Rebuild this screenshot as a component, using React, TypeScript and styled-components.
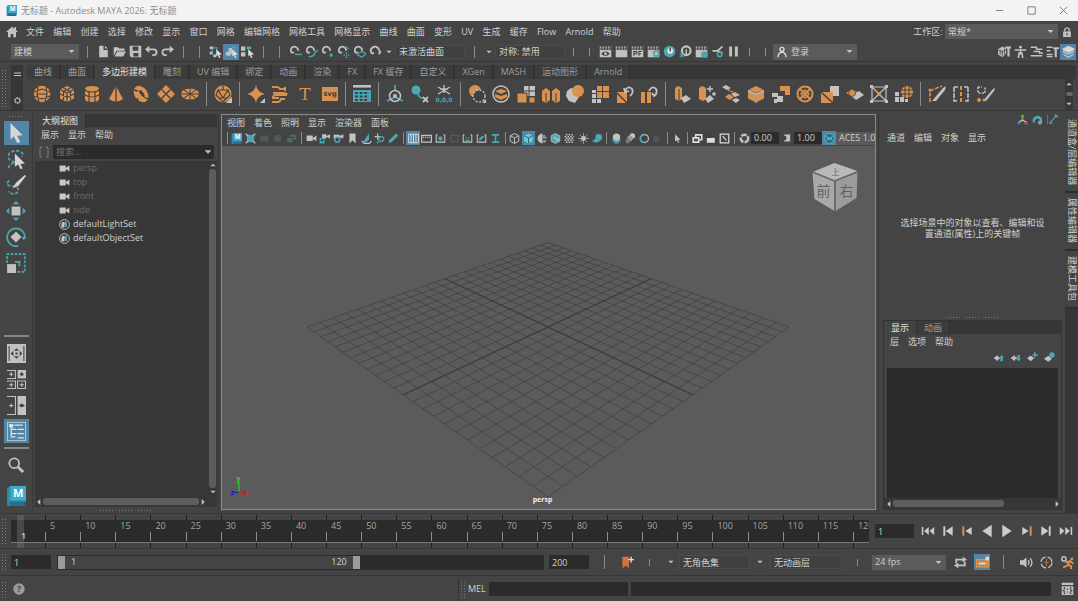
import React from 'react';
import styled, { createGlobalStyle, css } from 'styled-components';

const O = '#d8914f';
const T = '#48a9b5';
const G = '#c2c2c2';
const D = '#404040';

const GlobalStyle = createGlobalStyle`
  * { box-sizing: border-box; }
  body { margin: 0; background: #444; }
  body, button, input, select {
    font-family: "Open Sans", "Noto Sans CJK SC", sans-serif;
    font-size: 9px;
    line-height: 12px;
    color: #d0d0d0;
  }
  button, input, select { border: 0; padding: 0; margin: 0; border-radius: 0; background: none; outline: none; }
  svg { display: block; flex: none; }
  h1, h2, ul { margin: 0; padding: 0; font-size: 9px; font-weight: 400; list-style: none; }
`;

/* ---------- icons, all on an 18 unit grid ---------- */

const cubePath = 'M9 1l7 3.5v9L9 17l-7-3.5v-9z';
const clap = (
  <>
    <path d="M1 7h16v10H1z" fill={G} />
    <path d="M1 3h16M1 5.5h16" stroke={G} strokeWidth="1.6" strokeDasharray="2.2 1.6" />
  </>
);
const magnet = <path d="M4 11C-1 4 8-1 12 5l1 3M4 11l3-1" fill="none" stroke={G} strokeWidth="2.4" />;
const layerLeft = <path d="M1 10l7-5v3h3v4H8v3z" fill={G} />;
const frame = <path d="M2 3v12h14V3M2 3h2M14 3h2" fill="none" stroke={G} strokeWidth="1.8" />;

const icons: Record<string, React.ReactNode> = {
  home: <path d="M9 1L0 9h3v8h4v-5h4v5h4V9h3l-3-3V2h-3v2z" fill={G} />,
  newFile: <path d="M3 1h6v6h6v10H3zM11 1l4 4h-4z" fill={G} />,
  open: <path d="M1 3h6l2 2h7v3H5l-4 7zM6 9h12l-4 7H2z" fill={G} />,
  save: <path d="M1 1h16v16H3l-2-2zM5 2v6h8V2zM6 11v5h7v-5z" fill={G} fillRule="evenodd" />,
  undo: <><path d="M0 6l6-5v10z" fill={G} /><path d="M4 6h8q4 0 4 4t-4 4h-2" fill="none" stroke={G} strokeWidth="2.6" /></>,
  redo: <><path d="M18 6l-6-5v10z" fill={G} /><path d="M14 6H6q-4 0-4 4t4 4h2" fill="none" stroke={G} strokeWidth="2.6" /></>,
  selHier: <><path d="M1 2h5v4H1zM1 9h4v4H1zM6 13h4v4H6z" fill={G} /><path d="M7 4h4v3M5 7v6" stroke={T} strokeWidth="1.5" fill="none" /><path d="M10 6l8 7-4 .4 2 4-2 .6-2-4-2 2z" fill="#ddd" /></>,
  selObj: <><path d="M1 13a4 4 0 0 1 4-4V4h5v7l-3 4H2z" fill={G} /><path d="M10 3h4v5" stroke={T} strokeWidth="2" fill="none" /><path d="M10 6l8 7-4 .4 2 4-2 .6-2-4-2 2z" fill="#ddd" /></>,
  selComp: <><path d="M0 2h6v6H0zM0 10h6v6H0z" fill={G} /><path d="M8 2h6v4H8z" fill={T} /><path d="M10 6l8 7-4 .4 2 4-2 .6-2-4-2 2z" fill="#ddd" /></>,
  snapGrid: <>{magnet}<path d="M8 13h10" stroke={T} strokeWidth="2" /></>,
  snapCurve: <>{magnet}<path d="M5 16q8 1 9-6l4-3" stroke={T} strokeWidth="2" fill="none" /></>,
  snapPoint: <>{magnet}<circle cx="14" cy="14" r="2.4" fill={T} /></>,
  snapCenter: <>{magnet}<path d="M9 14h8M13 10v8M12 2l5 4" stroke={T} strokeWidth="2" strokeDasharray="2 1" /></>,
  snapPlane: <>{magnet}<path d="M6 13l6-4 6 3-6 5z" fill="none" stroke={T} strokeWidth="1.6" /></>,
  live: <path d="M4 12C-1 4 9-1 13 5l3 6M4 12l3-1M13 12l3-1" fill="none" stroke={G} strokeWidth="2.6" />,
  renderView: <>{clap}<path d="M3 12q6-6 12 0-6 6-12 0z" fill={D} /><circle cx="9" cy="12" r="2" fill={G} /></>,
  render: clap,
  ipr: <>{clap}<path d="M4 15V9h4v3H4M11 15V9h4M11 12h3" stroke={D} fill="none" strokeWidth="1.5" /></>,
  renderSet: <>{clap}<circle cx="13" cy="12" r="3.5" fill={G} stroke={T} strokeWidth="2.5" /></>,
  hyper: <><circle cx="9" cy="9" r="8" fill={T} /><circle cx="10" cy="8" r="4" fill="#e8e8e8" /><path d="M10 4v5" stroke={D} strokeWidth="2" /></>,
  lightEd: <><circle cx="10" cy="8" r="6" fill="none" stroke={G} strokeWidth="3" /><path d="M10 6v7" stroke={G} strokeWidth="2" /><path d="M1 12l6 5M7 12l-6 5" stroke={T} strokeWidth="1.6" /></>,
  renderSeq: <>{clap}<circle cx="13" cy="13" r="4.5" fill={T} /></>,
  setup: <><path d="M2 8h8M8 9l8-7M8 8l8 3" fill="none" stroke={G} strokeWidth="2.4" /><circle cx="12" cy="13" r="3" fill="none" stroke={T} strokeWidth="2" /></>,
  pause: <path d="M3 2h4v14H3zM11 2h4v14h-4z" fill={G} />,
  user: <path d="M6 5a3 3 0 1 1 6 0 3 3 0 1 1-6 0M3 17q0-7 6-8 6 1 6 8" fill="none" stroke="#ddd" strokeWidth="2" />,
  lock: <><path d="M2 8h14v10H2z" fill={G} /><path d="M5 8V4q4-5 8 0v4" fill="none" stroke={G} strokeWidth="2.4" /><path d="M9 11v4" stroke={D} strokeWidth="2" /></>,
  modelKit: <><path d="M0 6l6-4 5 3v7l-5 5-6-4zM10 2h8v3h-2v11h-3V5h-3z" fill={G} /><path d="M3 6v8M6 7v9M9 5v9M0 7l6 3 5-4" fill="none" stroke={D} /></>,
  human: <><circle cx="9" cy="3" r="2" fill={G} /><path d="M1 7h16M9 7v6M6 18l1-7h4l1 7" fill="none" stroke={G} strokeWidth="2.2" /></>,
  attr: <path d="M1 3h8v3h8M5 9h8v2h5M1 15h11M12 15h5" fill="none" stroke={G} strokeWidth="2" />,
  toolSet: <><path d="M1 3h8M1 8h5M1 13h8M1 16h8" stroke={G} strokeWidth="2" /><path d="M10 3h8v3h-3v11h-3V6h-2z" fill={G} /></>,
  channelBox: <><path d="M9 1l8 4v2l-8 4-8-4V5z" fill="#d8d8d8" /><path d="M1 8l8 4 8-4v2l-8 4-8-4zM2 12l7 4 7-4v2l-7 4-7-4z" fill="#c6cbce" /></>,
  sphere: <><circle cx="9" cy="9" r="8.3" fill={O} /><path d="M1 7l8-3 8 3M1 11l8 3 8-3M5 1.500L4 9l2 8M13 1.500L14 9l-2 8M4 9h10" fill="none" stroke={D} strokeWidth="1.1" /></>,
  cube: <><path d={cubePath} fill={O} /><path d="M2 4.500l7 3.500 7-3.500M9 8v9M5.500 3l7 3.500V15M12.500 3l-7 3.500V15M2 9l7 3.500L16 9" fill="none" stroke={D} strokeWidth="1.1" /></>,
  cylinder: <><path d="M2 4q0-3 7-3t7 3v10q0 3-7 3t-7-3z" fill={O} /><path d="M2 4q0 3 7 3t7-3M2 10q7 4 14 0M6 6v11M12 6v11" fill="none" stroke={D} strokeWidth="1.2" /></>,
  cone: <><path d="M9 1l7 13q-7 5-14 0z" fill={O} /><path d="M9 1v16" stroke={D} strokeWidth="1.3" /></>,
  torus: <><ellipse cx="9" cy="9" rx="6.500" ry="9" fill={O} transform="rotate(-35 9 9)" /><ellipse cx="10" cy="9" rx="1.600" ry="4" fill={D} transform="rotate(-35 9 9)" /><path d="M2 5l4 1M12 12l4 2M6 13l-1 3" stroke={D} strokeWidth="1.300" /></>,
  plane: <><path d="M9 0l9 9-9 9-9-9z" fill={O} /><path d="M4.500 4.500l9 9M13.500 4.500l-9 9" stroke={D} strokeWidth="1.300" /></>,
  disc: <><ellipse cx="9" cy="9" rx="9" ry="5.500" fill={O} /><path d="M3 5l12 8M15 5L3 13M9 3v12M0 9h18" stroke={D} strokeWidth="1" /></>,
  platonic: <><circle cx="9" cy="9" r="8.500" fill={O} /><path d="M4 5h10l2 5-7 7-7-7zM9 13L4 5M9 13l5-8M9 1v4M5 13h8" fill="none" stroke={D} strokeWidth="1.200" /><path d="M18 12v6h-6z" fill={G} /></>,
  star: <><path d="M9 0q1 7 9 9-8 2-9 9-1-7-9-9 8-2 9-9z" fill={O} /><path d="M18 13v5h-5z" fill={G} /></>,
  sweep: <path d="M1 2h5q2 0 3 2h5M14 2v4M2 8h10q5 0 3 2H6q-5 0-4 3h6M1 17h6q2 0 3-3h4" fill="none" stroke={O} strokeWidth="2" />,
  type: <text x="9" y="15" textAnchor="middle" fontFamily="DejaVu Serif" fontSize="17" fill={O}>T</text>,
  svg: <><rect x="1" y="2" width="16" height="14" fill={O} /><text x="9" y="11" textAnchor="middle" fontFamily="DejaVu Sans" fontWeight="700" fontSize="7" fill={D}>svg</text></>,
  content: <><path d="M0 1h18v16H0z" fill={T} /><path d="M0 4h18" stroke={D} strokeWidth="2" /><path d="M2 8h14M2 11.500h14M2 15h14" stroke={D} strokeWidth="2" strokeDasharray="3 1.600" /><path d="M0 1h18" stroke={G} strokeWidth="2" /></>,
  poseAxis: <><path d="M9 0v5M9 12l-8 4M9 12l8 4" stroke={T} strokeWidth="1.800" /><circle cx="9" cy="11" r="5.500" fill="none" stroke={G} strokeWidth="1.500" /><circle cx="9" cy="11" r="2" fill={G} /></>,
  delHist: <><circle cx="5" cy="5" r="4.500" fill={T} /><path d="M7 9q1 4 5 4" stroke={T} strokeWidth="1.600" fill="none" /><path d="M12 12l5 5M17 12l-5 5" stroke={G} strokeWidth="1.800" /></>,
  freeze: <><path d="M9 0v8M3 2l12 7M15 2L3 9M5 4h8" stroke={G} strokeWidth="1.300" /><text x="9" y="17" textAnchor="middle" fontFamily="DejaVu Sans" fontWeight="700" fontSize="6" fill={T}>0,0,0</text></>,
  booleanOp: <><circle cx="7" cy="6" r="6" fill={O} /><circle cx="11" cy="11" r="6" fill={D} stroke={G} strokeWidth="1.400" strokeDasharray="2 1.500" /><path d="M18 14v4h-4z" fill={G} /></>,
  combine: <><circle cx="9" cy="9" r="8" fill="none" stroke={G} strokeWidth="1.500" /><path d="M3 6l6-2 6 2-6 3zM3 9l6 2 6-2v3l-6 3-6-3z" fill={O} /></>,
  quad: <><path d="M7 1h11v10H7z" fill={G} /><path d="M12 1v10M7 6h11" stroke={D} /><path d="M0 8h10v10H0zM12 12h6v6h-6z" fill={O} stroke={D} /></>,
  mirror: <><path d="M0 6l4-3 4 3v9l-4 3-4-2z" fill={O} /><path d="M10 6l4-3 4 3v10l-4 2-4-3z" fill={O} /><path d="M4 8v9M14 8v9M9 2v16" stroke={D} strokeWidth="1" /></>,
  smooth: <><path d="M1 6l4-3 6 2 2 7-4 6-6-2-3-5z" fill={G} /><circle cx="12" cy="6" r="6" fill={O} /></>,
  subdiv: <><path d="M1 9h4v4H1zM1 14h4v4H1zM6 14h4v4H6zM1 5h4v3H1z" fill={G} /><path d="M6 1h5v5H6zM12 1h6v5h-6zM6 7h5v6H6zM12 7h6v6h-6z" fill={O} /></>,
  spinCcw: <><path d="M1 7h10v11H1z" fill={O} /><path d="M1 8l10 10" stroke={D} strokeWidth="1.400" /><path d="M9 6q3-6 7-2 2 4-2 7M8 3l1 4 4-1" fill="none" stroke={G} strokeWidth="1.800" /></>,
  spinCw: <><path d="M1 7h4v11H1zM7 7h4v11H7z" fill={O} /><path d="M9 6q3-6 7-2 2 4-2 7M17 8l-3 3-2-3" fill="none" stroke={G} strokeWidth="1.800" /></>,
  extrude: <><path d="M2 3l3-2 4 2v11l-3 2-4-2z" fill={O} /><path d="M8 13l5-3 5 4-7 4z" fill={G} /><path d="M6 4v12" stroke={D} /></>,
  bevel: <><path d="M1 3l3-2 4 2v11l-3 2-4-2z" fill={O} /><path d="M7 14l5-4 4 4-6 4z" fill={G} /><path d="M12 1v6M9 4h6M16 7v4M14 9h4" stroke={G} strokeWidth="1.400" /></>,
  bridge: <><path d="M0 2l4-2 5 3-4 2zM9 9l4-2 5 3-5 2zM10 15l4-2 4 2-4 3z" fill={G} /><path d="M3 12l4-3 5 3-4 3z" fill={O} /><path d="M6 5l9 4" stroke={O} strokeWidth="1.600" strokeDasharray="2 1" /></>,
  append: <><path d="M9 1l7 3.500-7 3.500-7-3.500z" fill={O} /><path d="M1 6l7 3.500V17l-7-3.500zM17 6l-7 3.500V17l7-3.500z" fill={O} /><path d="M1 5.500l8 4 8-4M9 9v9" fill="none" stroke={G} strokeWidth="1.400" /></>,
  wedge: <><path d="M8 1h10v9h-5V6H8z" fill={O} /><path d="M0 8h6v3h5v6H5v-5H0zM2 14h3v4H2z" fill={G} /></>,
  circularize: <><circle cx="9" cy="9" r="7.500" fill="none" stroke={O} strokeWidth="2" /><path d="M4 4l10 10M14 4L4 14" stroke={O} strokeWidth="2" /><path d="M9 5l4 4-4 4-4-4z" fill="none" stroke={O} strokeWidth="1.500" /></>,
  connect: <><path d="M9 1h9v10H9z" fill={G} /><path d="M0 7h12v11H0z" fill={O} /><path d="M0 7l12 11" stroke={D} strokeWidth="1.400" /></>,
  detach: <><path d="M0 8l6-4 7 4-6 4z" fill={O} /><path d="M5 11l8-5 5 4-8 5z" fill={G} /><circle cx="6" cy="8" r="3.500" fill={O} stroke={D} strokeWidth=".8" /></>,
  lattice: <><path d="M2 2h14v14H2zM2 2l14 14M16 2L2 16" fill="none" stroke={G} strokeWidth="1.200" /><circle cx="9" cy="9" r="2" fill={O} /><path d="M0 0h3v3H0zM15 0h3v3h-3zM0 15h3v3H0zM15 15h3v3h-3z" fill={G} /></>,
  remesh: <><circle cx="12" cy="7" r="6" fill={O} /><path d="M6 5h12M6 9h12M10 1v12M14 1v12" stroke={D} /><path d="M0 7h4v4H0zM0 12h4v5H0zM5 12h4v5H5z" fill={G} /><path d="M10 14h3v3h-3z" fill={G} /></>,
  multicut: <><path d="M2 17V6l4-2 8-3" fill="none" stroke={O} strokeWidth="1.600" strokeDasharray="4 1.500" /><path d="M4 16L15 3l3-2-1 4L8 16z" fill={G} /><circle cx="2" cy="5" r="1.600" fill={O} /></>,
  targetWeld: <><path d="M2 2h4M2 2v14h4M16 2h-4M16 2v14h-4" fill="none" stroke={G} strokeWidth="1.600" strokeDasharray="5 1" /><path d="M9 1v16" stroke={O} strokeWidth="2" strokeDasharray="4 2" /></>,
  quadDraw: <><path d="M1 2h4M1 2v6h7V2" fill="none" stroke={G} strokeWidth="1.600" strokeDasharray="2 1.300" /><path d="M6 16L16 4l2-1-1 3L9 16z" fill={G} /><circle cx="2" cy="15" r="2" fill={O} /><circle cx="7" cy="15" r="1.500" fill={O} /></>,
  arrow: <path d="M4 0l11 11-5 .5 3 5.500-3 1-3-6-3 3z" fill="#d6d6d6" />,
  lasso: <><path d="M8 12q-8-2-5-8 6-5 12 0l-1 3M7 12l-4 3-1 3" fill="none" stroke={T} strokeWidth="1.500" strokeDasharray="3 1.500" /><path d="M8 4l9 9-4 .5 2 4-2 .5-2-4-3 2z" fill="#d6d6d6" /></>,
  paint: <><path d="M3 5q-5 4 2 5 7 0 6 5-4 4-9 0" fill="none" stroke={T} strokeWidth="1.500" strokeDasharray="3 1.500" /><path d="M17 0l1 1-7 9-3 1-2 1 3-5z" fill="#d6d6d6" /></>,
  move: <><path d="M5 5h8v8H5z" fill={G} /><path d="M9 0l3 3H6zM9 18l3-3H6zM0 9l3-3v6zM18 9l-3-3v6z" fill={T} /></>,
  rotate: <><path d="M11 17a8 8 0 1 1 6-7" fill="none" stroke={T} strokeWidth="1.500" /><path d="M14 9h4l-2 3z" fill={T} /><path d="M9 4l5 5-5 5-5-5z" fill={G} /></>,
  scale: <><path d="M1 9V1h16v16H9" fill="none" stroke={T} strokeWidth="1.400" strokeDasharray="2.500 1.200" /><path d="M1 10h8v8H1z" fill={G} /><path d="M8 8h4v4M9 8h4" fill="none" stroke={T} strokeWidth="1.400" /></>,
  single: <><path d="M0 0h18v18H0z" fill={G} /><path d="M2 2v14M16 2v14" stroke={D} /><path d="M9 4l2.500 2.500h-5zM9 14l2.500-2.500h-5zM3.500 9L6 6.500v5zM14.500 9L12 6.500v5zM8 8h2v2H8z" fill={D} /></>,
  four: <><path d="M10 0h8v8h-8z" fill={G} /><path d="M0 .5h8v7.500H0M0 10.500h8v7H0M10 10.500h7.500v7H10zM2 4h4M4 2v4M2 14h4M4 12v4M12 14h4M14 12v4" fill="none" stroke={G} strokeWidth="1" /><path d="M14 2l2 2-2 2-2-2z" fill={D} /></>,
  two: <><path d="M10 0h8v18h-8z" fill={G} /><path d="M0 .5h8v17H0M2 9h4M4 7v4" fill="none" stroke={G} /><path d="M14 7l3 2-3 2-3-2z" fill={D} /></>,
  outliner: <><path d="M0 0h18v18H0z" fill="none" stroke="#cbd3d8" strokeWidth="1.500" /><path d="M4 4v10h4M4 7h5M4 11h5M10 7h6M10 11h6M10 15h6M7 3h8" fill="none" stroke="#dfe5e8" strokeWidth="1.200" /><path d="M2 2h4v3H2z" fill="#dfe5e8" /></>,
  search: <><circle cx="7" cy="7" r="5.500" fill="none" stroke={G} strokeWidth="2" /><path d="M11 11l6 6" stroke={G} strokeWidth="3" /></>,
  camera: <path d="M1 4h10v10H1zM11 8l6-4v10l-6-4z" fill="#c8c8c8" />,
  set: <><circle cx="9" cy="9" r="8" fill="none" stroke={G} strokeWidth="1.600" /><path d="M4 8h5v6H4z" fill={G} /><path d="M9 4h4v9h-3V7z" fill={T} /><circle cx="7" cy="7" r="2.500" fill={G} /></>,
  filter: <path d="M6 2H3v14h3M12 2h3v14h-3" fill="none" stroke="#8a8a8a" strokeWidth="1.600" strokeDasharray="3 1" />,
  selCam: <><path d="M3 3h12v12H3z" fill={T} /><path d="M1 1l4 4M17 1l-4 4M1 17l4-4M17 17l-4-4" stroke={G} strokeWidth="2" /></>,
  dimA: <path d="M2 4h14v10H2z" fill="#4c5a5c" />,
  dimB: <circle cx="9" cy="9" r="6" fill="#4d5a5c" />,
  dimC: <path d="M2 8h9v7H2zM6 3h11v8h-4V6H6z" fill="#536668" />,
  cam: <path d="M1 4h10v9H1zM11 8l6-4v9l-6-3z" fill={G} />,
  camLock: <><path d="M5 2h7v7H5zM12 5l6-3v7l-6-3z" fill={G} /><path d="M1 8h8v9H1z" fill={T} /><circle cx="5" cy="12" r="2" fill={D} /></>,
  camAttr: <><path d="M1 3h10v6H1zM11 5l6-3v7l-6-2z" fill={G} /><circle cx="7" cy="11" r="4" fill={D} stroke={T} strokeWidth="2.500" /></>,
  bookmark: <path d="M4 1h10v16l-5-5-5 5z" fill={G} />,
  imgPlane: <><path d="M3 15L13 1v10l-4 4z" fill={T} /><path d="M1 13l4 4h9l3-4" fill="none" stroke={G} strokeWidth="1.800" /></>,
  panZoom: <><path d="M6 1v10M1 6h10" stroke={G} strokeWidth="2" /><circle cx="12" cy="10" r="4" fill="none" stroke={T} strokeWidth="2" /><path d="M8 13l-3 4" stroke={T} strokeWidth="2" /></>,
  pencil: <path d="M2 12L13 1l4 3L7 14l-6 3z" fill={T} />,
  gridOn: <path d="M1 2h16v14H1zM5 2v14M9 2v14M13 2v14" fill="none" stroke="#dde3e6" strokeWidth="1.500" />,
  filmGate: <><path d="M1 4h16v11H1z" fill="none" stroke={G} strokeWidth="2" /><path d="M3 7h12" stroke={G} strokeWidth="2" strokeDasharray="2 1.500" /></>,
  resGate: <>{frame}<circle cx="9" cy="9" r="3.500" fill={T} /></>,
  gateMask: <path d="M3 4h12v10H3z" fill="none" stroke="#626262" strokeWidth="2" strokeDasharray="2 1" />,
  fieldChart: <>{frame}<path d="M6 7h2v2H6zM10 7h2v2h-2zM6 11h6v2H6z" fill={T} /></>,
  safeAction: <>{frame}<path d="M5 13V9l5-4h4l-4 5z" fill={T} /></>,
  safeTitle: <path d="M3 3h12M9 3v11M3 15h12" fill="none" stroke={T} strokeWidth="2.600" />,
  wire: <path d={cubePath + 'M2 4.500l7 3.500 7-3.500M9 8v9'} fill="none" stroke={G} strokeWidth="1.600" />,
  shaded: <><path d={cubePath} fill="#62ced8" /><path d="M2 4.500l7 3.500 7-3.500M9 8v9" fill="none" stroke="#2d5b70" strokeWidth="1.600" /></>,
  halfMat: <><path d="M9 1a8 8 0 0 0 0 16z" fill={G} /><path d="M10 3h3v3h3v3h-3v3h3l-3 4h-3v-4h3V9h-3z" fill="#999" /></>,
  textured: <><path d={cubePath} fill={T} stroke={G} strokeWidth="1.300" /><path d="M6 6h3v4H6zM10 9h4v4h-4z" fill={G} /></>,
  checker: <path d="M3 3h12M3 9h12M3 15h12M1 6h15M1 12h15" stroke={G} strokeWidth="2.400" strokeDasharray="2.600 2" />,
  lights: <><circle cx="9" cy="9" r="4" fill={G} /><path d="M9 0v18M0 9h18M3 3l12 12M15 3L3 15" stroke={G} strokeWidth="1" /></>,
  shadow: <><circle cx="11" cy="7" r="5.500" fill={T} /><path d="M0 13l8-5 6 5-8 3z" fill={T} /></>,
  ao: <><circle cx="9" cy="7" r="6" fill={G} /><path d="M2 11q7 6 14 0M4 14q5 5 10 0" stroke={T} fill="none" strokeWidth="1.800" /></>,
  blur: <><circle cx="12" cy="5" r="4.500" fill={G} /><circle cx="8" cy="9" r="4.500" fill="#9a9a9a" /><circle cx="4.500" cy="13" r="4" fill="#777" /></>,
  aa: <><circle cx="9" cy="9" r="6.500" fill="none" stroke={G} strokeWidth="2" /><path d="M9 2a7 7 0 0 0 0 14" fill="none" stroke={T} strokeWidth="2.500" /></>,
  dof: <path d="M2 4h10v10H2z" fill="#47585b" />,
  isolate: <path d="M5 2l9 9-4 .5 2 4-2 .5-2-4-3 2z" fill={G} />,
  panels: <path d="M2 8h9v7H2zM6 8V3h10v8h-5" fill="none" stroke="#ddd" strokeWidth="2.600" />,
  tear: <><path d="M3 8h13v8H3z" fill="#ddd" /><path d="M2 2h9v6H2z" fill={D} /></>,
  maxi: <path d="M2 2h14v14H2zM6 5l6 7" fill="none" stroke="#ddd" strokeWidth="2" />,
  exposure: <circle cx="9" cy="9" r="6" fill="none" stroke={G} strokeWidth="4" strokeDasharray="9 2" />,
  gamma: <path d="M3 1h13v16H3v-3a5 5 0 0 0 0-10z" fill={G} />,
  colorMgmt: <><circle cx="9" cy="9" r="8" fill="#2e6276" stroke="#52c1cc" strokeWidth="1.500" /><path d="M2 6q7 3 14 0M2 12q7-3 14 0M5 9h8" stroke="#52c1cc" strokeWidth="1.500" fill="none" /></>,
  axis: <><path d="M9 2v8" stroke="#6fae3f" strokeWidth="3" /><path d="M9 10l-7 4M9 10l7 4" stroke={G} strokeWidth="2" /><path d="M9 0l3 5H6z" fill="#6fae3f" /><path d="M0 17l2-6 5 5z" fill="#4a78d8" /><path d="M18 17l-2-6-5 5z" fill="#d8504c" /></>,
  magnetTeal: <><path d="M1 11a8 8 0 1 1 16 0l-1 3h-4l1-4q-4-5-8 0v4H1z" fill={T} /><circle cx="13" cy="14" r="3.500" fill="#999" /></>,
  pinEdit: <><path d="M1 1v16" stroke="#777" strokeWidth="1.500" /><path d="M4 15h5M5 14L15 3" stroke={T} strokeWidth="2" /><path d="M13 1l4 4" stroke={T} strokeWidth="3" /></>,
  layerUp: <>{layerLeft}<path d="M14 5l4 4h-2v6h-4V9h-2z" fill={T} /></>,
  layerDown: <>{layerLeft}<path d="M14 15l4-4h-2V5h-4v6h-2z" fill={T} /></>,
  layerNew: <><path d="M0 10l6-4 6 4-6 5z" fill={G} /><path d="M13 0v9M9 5h9" stroke={T} strokeWidth="2.400" /></>,
  layerSel: <><path d="M0 11l7-5 6 5-6 5z" fill={G} /><circle cx="13" cy="5" r="4.500" fill={T} /></>,
  toStart: <path d="M1 4h2v10H1zM10 4v10L4 9zM17 4v10l-6-5z" fill="#ccc" />,
  stepBack: <path d="M3 3h2.500v12H3zM15 3v12L6 9z" fill="#ccc" />,
  keyBack: <><path d="M3 3h2.500v12H3z" fill={O} /><path d="M15 4v10L7 9z" fill="#ccc" /></>,
  playBack: <path d="M15 1v16L3 9z" fill="#ccc" />,
  play: <path d="M3 1v16l12-8z" fill="#ccc" />,
  keyNext: <><path d="M12.500 3H15v12h-2.500z" fill={O} /><path d="M3 4v10l8-5z" fill="#ccc" /></>,
  stepNext: <path d="M12.500 3H15v12h-2.500zM3 3v12l9-6z" fill="#ccc" />,
  toEnd: <path d="M15 4h2v10h-2zM8 4v10l6-5zM1 4v10l6-5z" fill="#ccc" />,
  addMark: <><path d="M2 1h9v16l-4-4-5 4z" fill="#d9703f" /><path d="M14 1v8M10 5h8" stroke="#ddd" strokeWidth="2" /></>,
  loop: <><path d="M3 10V5h10M15 8v5H5" fill="none" stroke={G} strokeWidth="2.400" /><path d="M12 1l6 4-6 4zM6 9l-6 4 6 4z" fill={G} /></>,
  cache: <><path d="M0 4h18v12H0z" fill={O} /><path d="M2 7h14M2 13h14" stroke="#5285a6" strokeWidth="1.500" strokeDasharray="2 1.500" /><path d="M4 9h9v3H4z" fill="#e0d0c0" /><path d="M13 1h5v5h-5z" fill="#ddd" /></>,
  speaker: <><path d="M0 6h4l5-4v14l-5-4H0z" fill={G} /><path d="M11 6q3 3 0 6M14 3q5 6 0 12" fill="none" stroke={G} strokeWidth="1.800" /></>,
  autoKey: <><circle cx="9" cy="9" r="7.500" fill="none" stroke={G} strokeWidth="1.800" strokeDasharray="9 3" /><path d="M9 4v10M6 9h6" stroke="#a8694c" strokeWidth="1.500" /></>,
  prefs: <><circle cx="4" cy="4" r="3" fill="none" stroke={G} strokeWidth="2" /><circle cx="15" cy="4" r="2" fill={O} /><path d="M6 9l7-2 4 4M12 8l-3 5-6 3M9 12l5 2v4" fill="none" stroke={O} strokeWidth="2.600" /></>,
  help: <><circle cx="9" cy="9" r="8.500" fill="#9a9a9a" /><text x="9" y="14" textAnchor="middle" fontFamily="Open Sans" fontWeight="700" fontSize="13" fill={D}>?</text></>,
  script: <><path d="M1 1h16v3H1zM1 6h16v12H1z" fill={G} /><path d="M6 8H4.500v3L3 12l1.500 1v3H6M12 8h1.500v3l1.500 1-1.500 1v3H12M9 9v2M9 13v2" fill="none" stroke={D} strokeWidth="1.400" /></>,
  burger: <path d="M2 6h14M2 11h14" stroke={G} strokeWidth="2.200" />,
  gear: <circle cx="9" cy="9" r="5" fill="none" stroke={G} strokeWidth="3" strokeDasharray="4 1" />,
  maya: <><path d="M1 2l3-2h14v13l-2 5H1z" fill="#2d8fae" /><path d="M4 0h14v13H4z" fill="#3fabcc" /><text x="11" y="10" textAnchor="middle" fontFamily="Open Sans" fontWeight="700" fontSize="10" fill="#fff">M</text><path d="M3 14h14v4H3z" fill="#2a6f88" /></>,
  mini: <path d="M3 9h12" stroke="#777" strokeWidth="1.500" />,
  maxWin: <path d="M3 3h12v12H3z" fill="none" stroke="#777" strokeWidth="1.500" />,
  close: <path d="M3 3l12 12M15 3L3 15" stroke="#777" strokeWidth="1.500" />,
  down: <path d="M3 6h12l-6 6z" fill={G} />,
  up: <path d="M3 12h12l-6-6z" fill={G} />,
  left: <path d="M12 2v14L5 9z" fill={G} />,
  right: <path d="M6 2v14l7-7z" fill={G} />,
};

const Icon = ({ n, s = 13 }: { n: string; s?: number }) => (
  <svg width={s} height={s} viewBox="0 0 18 18" aria-hidden="true">{icons[n]}</svg>
);

/* ---------- shared parts ---------- */

const dots = css`
  background-image: linear-gradient(#444 2px, transparent 2px), repeating-linear-gradient(90deg, #7c7c7c 0 1px, transparent 1px 3px);
  background-size: 100% 3px, 100% 100%;
`;

const Page = styled.div`
  min-height: 100vh;
  display: flex;
  flex-direction: column;
  background: #444;
  white-space: nowrap;
  overflow: hidden;
`;

const Grip = styled.div`
  flex: none;
  width: 4px;
  margin: 3px 5px 3px 2px;
  ${dots}
`;

const ToolButton = styled.button<{ $w?: number; $h?: number; $on?: boolean }>`
  flex: none;
  width: ${p => p.$w ?? 16}px;
  height: ${p => p.$h ?? 16}px;
  display: flex;
  align-items: center;
  justify-content: center;
  background: ${p => (p.$on ? '#5285a6' : 'transparent')};
`;

const Tool = ({ n, s, w, h, on }: { n: string; s?: number; w?: number; h?: number; on?: boolean }) => (
  <ToolButton type="button" aria-label={n} $w={w} $h={h} $on={on}><Icon n={n} s={s} /></ToolButton>
);

const Bar = styled.span<{ $w?: number; $h?: number }>`
  flex: none;
  width: ${p => p.$w ?? 16}px;
  height: ${p => p.$h ?? 12}px;
  background: linear-gradient(#8b8b8b, #8b8b8b) center / 1px 100% no-repeat;
`;

const MenuRow = styled.nav<{ $pad?: number }>`
  display: flex;
  align-items: center;
  gap: 9px;
  height: 15px;
  padding-left: ${p => p.$pad ?? 6}px;
`;

const MenuItem = styled.button`
  flex: none;
  height: 15px;
  white-space: nowrap;
`;

const Menus = ({ items, pad }: { items: string[]; pad?: number }) => (
  <MenuRow $pad={pad}>{items.map(i => <MenuItem type="button" key={i}>{i}</MenuItem>)}</MenuRow>
);

const SelectBox = styled.label<{ $w: number; $h?: number }>`
  flex: none;
  display: flex;
  align-items: center;
  gap: 3px;
  width: ${p => p.$w}px;
  height: ${p => p.$h ?? 16}px;
  padding: 0 3px;
  background: #5b5b5b;
`;

const NativeSelect = styled.select`
  flex: 1;
  min-width: 0;
  appearance: none;
`;

const Select = ({ label, value, w, h, icon }: { label: string; value: string; w: number; h?: number; icon?: string }) => (
  <SelectBox $w={w} $h={h}>
    {icon && <Icon n={icon} s={12} />}
    <NativeSelect aria-label={label} defaultValue={value}><option>{value}</option></NativeSelect>
    <Icon n="down" s={9} />
  </SelectBox>
);

const Field = styled.input<{ $w?: number; $flat?: boolean; $h?: number }>`
  flex: ${p => (p.$w ? 'none' : 1)};
  width: ${p => (p.$w ? `${p.$w}px` : 'auto')};
  min-width: 0;
  height: ${p => p.$h ?? 14}px;
  padding: 0 3px;
  background: ${p => (p.$flat ? '#404040' : '#2b2b2b')};
  border: ${p => (p.$flat ? '1px solid #4b4b4b' : '0')};
`;

/* ---------- title, menu and status line ---------- */

const TitleBar = styled.header`
  display: flex;
  align-items: center;
  height: 21px;
  padding: 0 8px 0 6px;
  gap: 4px;
  background: #f3f3f3;
  h1 { flex: 1; color: #8d8d8d; }
`;

const WindowButtons = styled.div`
  display: flex;
  gap: 18px;
`;

const MenuLine = styled.div`
  display: flex;
  align-items: center;
  height: 21px;
  padding: 0 2px 0 4px;
`;

const MainMenu = styled.nav`
  display: flex;
  justify-content: space-between;
  width: 595px;
  margin-left: 6px;
`;

const Spacer = styled.div`
  flex: 1;
`;

const StatusLine = styled.div`
  display: flex;
  align-items: center;
  height: 20px;
  padding-right: 2px;
  border-bottom: 1px solid #363636;
`;

/* ---------- shelf ---------- */

const Shelf = styled.section`
  display: flex;
  height: 49px;
  padding-top: 3px;
  border-bottom: 1px solid #363636;
`;

const ShelfSide = styled.div`
  flex: none;
  width: 12px;
  margin-right: 4px;
  height: 45px;
  padding: 5px 0;
  display: flex;
  flex-direction: column;
  align-items: center;
  justify-content: space-between;
  background: #373737;
`;

const ShelfBody = styled.div`
  flex: 1;
  min-width: 0;
`;

const TabStrip = styled.div`
  display: flex;
  gap: 1px;
  height: 14px;
  margin-right: 2px;
  background: #373737;
`;

const Tab = styled.button<{ $on?: boolean }>`
  flex: none;
  height: 14px;
  padding: 0 7px;
  border-right: 1px solid #2e2e2e;
  background: ${p => (p.$on ? '#444' : '#3c3c3c')};
  color: ${p => (p.$on ? '#e6e6e6' : '#9c9c9c')};
`;

const ShelfRow = styled.div`
  display: flex;
  align-items: center;
  height: 30px;
  padding: 0 5px 0 3px;
`;

const ShelfIcons = styled.div`
  display: flex;
  align-items: center;
  width: 968px;
  button { flex: 1; min-width: 0; height: 24px; }
`;

const ShelfScroll = styled.div`
  display: flex;
  flex-direction: column;
  align-items: center;
  gap: 4px;
  margin-left: auto;
  padding: 2px 0;
  background: #373737;
`;

const Knob = styled.span`
  width: 7px;
  height: 4px;
  border-radius: 2px;
  background: #666;
`;

/* ---------- work area ---------- */

const Work = styled.main`
  flex: 1;
  display: flex;
  min-height: 0;
  padding-top: 3px;
`;

const ToolBox = styled.aside`
  flex: none;
  width: 33px;
  display: flex;
  flex-direction: column;
  align-items: center;
  gap: 2px;
  border-right: 1px solid #393939;
`;

const TopDots = styled.div`
  width: 14px;
  height: 3px;
  margin-bottom: 2px;
  ${dots}
`;

const Rule = styled.hr`
  width: 25px;
  height: 2px;
  margin: 2px 0;
  border: 0;
  background: #858585;
`;

const Outliner = styled.section`
  flex: none;
  width: 186px;
  display: flex;
  flex-direction: column;
  padding: 0 1px 0 2px;
  margin-right: 2px;
  border-right: 1px solid #373737;
`;

const PanelTabs = styled.div`
  display: flex;
  height: 13px;
  background: #373737;
`;

const SearchRow = styled.div`
  display: flex;
  align-items: center;
  height: 19px;
  padding: 0 3px;
`;

const SearchBox = styled.label`
  flex: 1;
  display: flex;
  align-items: center;
  margin-left: 3px;
  padding-right: 1px;
  border-radius: 2px;
  background: #2b2b2b;
`;

const TreeArea = styled.div`
  flex: 1;
  display: flex;
  background: #373737;
`;

const Tree = styled.ul`
  flex: 1;
  padding-left: 24px;
`;

const TreeItem = styled.li<{ $dim?: boolean }>`
  display: flex;
  align-items: center;
  gap: 3px;
  height: 14px;
  color: ${p => (p.$dim ? '#6c6c6c' : '#d0d0d0')};
`;

const VScroll = styled.div`
  width: 9px;
  display: flex;
  flex-direction: column;
  align-items: center;
`;

const VThumb = styled.div`
  flex: 1;
  width: 7px;
  border-radius: 3px;
  background: #5c5c5c;
`;

const HScroll = styled.div`
  display: flex;
  align-items: center;
  height: 11px;
  background: #373737;
`;

const HThumb = styled.div<{ $grow: number }>`
  flex: ${p => p.$grow};
  height: 7px;
  border-radius: 3px;
  background: #5e5e5e;
`;

const Rest = styled.div<{ $grow: number }>`
  flex: ${p => p.$grow};
`;

const BottomDots = styled.div`
  display: flex;
  justify-content: center;
  gap: 5px;
  height: 6px;
  padding-top: 1px;
  span { width: 14px; height: 3px; ${dots} }
`;

const Viewport = styled.section`
  flex: 1;
  min-width: 0;
  display: flex;
  flex-direction: column;
  margin-bottom: 3px;
  border: 1px solid #8a8a8a;
`;

const PanelTools = styled.div`
  display: flex;
  align-items: center;
  height: 16px;
  padding-left: 2px;
  overflow: hidden;
`;

const PanelIcons = styled.div`
  flex: none;
  display: flex;
  align-items: center;
  width: 527px;
  button { flex: 1; min-width: 0; height: 14px; }
`;

const ColorSpace = styled.button`
  flex: 1;
  min-width: 0;
  height: 13px;
  padding-left: 3px;
  text-align: left;
  overflow: hidden;
  background: #5b5b5b;
`;

const Canvas = styled.div`
  flex: 1;
  position: relative;
  min-height: 0;
  background: #5b5b5b;
`;

const Scene = styled.svg`
  position: absolute;
  inset: 0;
  width: 100%;
  height: 100%;
`;

const RightPanel = styled.section`
  flex: none;
  width: 187px;
  margin-left: 2px;
  padding: 0 3px 3px 4px;
  border-left: 1px solid #373737;
  display: flex;
  flex-direction: column;
`;

const CornerIcons = styled.div`
  display: flex;
  justify-content: flex-end;
  gap: 4px;
  padding: 0 4px 5px 0;
`;

const Notice = styled.p`
  flex: 1;
  display: flex;
  align-items: center;
  justify-content: center;
  margin: 0;
  padding: 0 12px 4px;
  text-align: center;
  line-height: 11px;
`;

const LayerEditor = styled.section`
  display: flex;
  flex-direction: column;
  height: 190px;
  border: 1px solid #333;
`;

const LayerTools = styled.div`
  display: flex;
  justify-content: flex-end;
  gap: 6px;
  height: 16px;
  align-items: center;
  padding-right: 6px;
`;

const LayerList = styled.div`
  flex: 1;
  margin: 3px 3px 0;
  background: #2b2b2b;
`;

const SideTabs = styled.aside`
  flex: none;
  width: 13px;
  background: #373737;
`;

const SideTab = styled.button<{ $h: number }>`
  display: block;
  width: 13px;
  height: ${p => p.$h}px;
  border-bottom: 2px solid #2e2e2e;
  background: #444;
  writing-mode: vertical-rl;
  text-orientation: sideways;
  text-align: center;
`;

/* ---------- time line ---------- */

const Line = styled.div<{ $h: number }>`
  display: flex;
  align-items: center;
  height: ${p => p.$h}px;
  border-top: 1px solid #363636;
  ${Grip} { align-self: stretch; }
`;

const TimeSlider = styled.div`
  flex: 1;
  min-width: 0;
  display: flex;
  height: 33px;
  margin-right: 6px;
  background:
    linear-gradient(#787878, #787878) 0 27px / 100% 1px no-repeat,
    linear-gradient(#2b2b2b, #2b2b2b) 0 5px / 100% 22px no-repeat;
`;

const Lead = styled.div`
  flex: none;
  width: 34px;
  padding-left: 6px;
`;

const Current = styled.span`
  display: block;
  width: 7px;
  height: 33px;
  padding: 15px 0 0 4px;
  font-weight: 600;
  color: #b9dcff;
  background: rgba(130, 130, 130, 0.35);
`;

const Tick = styled.div<{ $grow: number }>`
  flex: ${p => p.$grow} 1 0;
  min-width: 0;
  overflow: hidden;
  padding: 5px 0 0 5px;
  color: #a4a4a4;
  background:
    linear-gradient(#8c8c8c, #8c8c8c) 0 17px / 1px 9px no-repeat,
    linear-gradient(#1f1f1f, #1f1f1f) 0 0 / 1px 5px no-repeat,
    linear-gradient(#1f1f1f, #1f1f1f) 0 28px / 1px 5px no-repeat;
`;

const PlayRow = styled.div`
  flex: none;
  display: flex;
  justify-content: space-between;
  width: 154px;
  margin: 0 4px 0 6px;
`;

const Range = styled.div`
  flex: 1;
  min-width: 0;
  display: flex;
  align-items: center;
  height: 15px;
  margin: 0 5px 0 6px;
  border: 1px solid #2b2b2b;
  background: #2b2b2b;
`;

const RangeBody = styled.div`
  flex: 292;
  display: flex;
  align-items: center;
  justify-content: space-between;
  height: 13px;
  background: #444;
  span { padding: 0 6px; }
`;

const Handle = styled.button`
  flex: none;
  width: 7px;
  height: 13px;
  background: #9b9b9f;
`;

const HelpCell = styled.div`
  flex: 458;
  display: flex;
  align-items: center;
  height: 24px;
  border-right: 1px solid #363636;
`;

const CommandCell = styled.label`
  flex: 592;
  display: flex;
  align-items: center;
  gap: 3px;
  padding-right: 5px;
  ${Grip} { margin-right: 0; height: 18px; }
`;

/* ---------- content ---------- */

const mainMenu = ['文件', '编辑', '创建', '选择', '修改', '显示', '窗口', '网格', '编辑网格', '网格工具', '网格显示', '曲线', '曲面', '变形', 'UV', '生成', '缓存', 'Flow', 'Arnold', '帮助'];
const shelfTabs = ['曲线', '曲面', '多边形建模', '雕刻', 'UV 编辑', '绑定', '动画', '渲染', 'FX', 'FX 缓存', '自定义', 'XGen', 'MASH', '运动图形', 'Arnold'];
const shelf = 'sphere cube cylinder cone torus plane disc | platonic | star sweep type svg | content | poseAxis delHist freeze | booleanOp combine quad mirror smooth subdiv spinCcw spinCw | extrude bevel bridge append wedge circularize connect detach lattice remesh | multicut targetWeld quadDraw'.split(' ');
const statusA = '| newFile open save undo redo | | selHier selObj selComp | | snapGrid snapCurve snapPoint snapCenter snapPlane live'.split(' ');
const statusB = '| | renderView render ipr renderSet hyper lightEd renderSeq setup pause | |'.split(' ');
const panelTools = '| maya selCam dimA dimB dimC | cam camLock camAttr bookmark imgPlane panZoom pencil | gridOn filmGate resGate gateMask fieldChart safeAction safeTitle | wire shaded halfMat textured checker lights shadow | ao blur aa dof | isolate | panels tear maxi | exposure'.split(' ');
const play = ['toStart', 'stepBack', 'keyBack', 'playBack', 'play', 'keyNext', 'stepNext', 'toEnd'];
const frames = Array.from({ length: 24 }, (_, i) => (i + 1) * 5);

const project = (u: number, v: number) => {
  const w = 1 - 0.168 * (u + v);
  return [548.5 + (120.5 * (u - v)) / w, 327 + (56.4 * (u + v)) / w] as const;
};

const GroundGrid = () => {
  let thin = '';
  let axes = '';
  for (let i = -12; i <= 12; i++) {
    const t = i / 12;
    const [a, b, c, d] = [project(t, -1), project(t, 1), project(-1, t), project(1, t)];
    const seg = `M${a[0]} ${a[1]}L${b[0]} ${b[1]}M${c[0]} ${c[1]}L${d[0]} ${d[1]}`;
    if (i === 0) axes += seg;
    else thin += seg;
  }
  return (
    <g fill="none" stroke="#3d3d3d">
      <path d={thin} strokeWidth="1" strokeOpacity="0.65" />
      <path d={axes} strokeWidth="1.300" />
    </g>
  );
};

const ViewCube = () => (
  <g>
    <path d="M835 163l23 8-23 10-22-9z" fill="#b9b9b9" />
    <path d="M813 172l22 9v30l-20-12z" fill="#a9a9a9" />
    <path d="M858 172l-22 9v30l21-13z" fill="#9c9c9c" />
    <path d="M813 172l22 9 23-9M835.500 181v30" fill="none" stroke="#666" strokeWidth="1.500" />
    <g fill="#5f6264" fontFamily="Noto Sans CJK SC" textAnchor="middle">
      <text x="836" y="175" fontSize="8">上</text>
      <text x="824" y="196" fontSize="14">前</text>
      <text x="847" y="196" fontSize="14">右</text>
    </g>
  </g>
);

const AxisMark = () => (
  <g fontFamily="Open Sans" fontSize="7" fontWeight="700">
    <path d="M239.500 492V482" stroke="#1fe01f" />
    <path d="M239 492l5 1" stroke="#e01515" />
    <path d="M239 492l-5 1" stroke="#1515d8" />
    <text x="237" y="481" fill="#1fe01f">y</text>
    <text x="244" y="495" fill="#e01515">x</text>
    <text x="231" y="495" fill="#1515d8">z</text>
  </g>
);

export default function App() {
  return (
    <Page>
      <GlobalStyle />
      <TitleBar>
        <Icon n="maya" s={11} />
        <h1>无标题 - Autodesk MAYA 2026: 无标题</h1>
        <WindowButtons>
          <Tool n="mini" s={11} w={14} /><Tool n="maxWin" s={11} w={14} /><Tool n="close" s={11} w={14} />
        </WindowButtons>
      </TitleBar>
      <MenuLine>
        <Tool n="home" s={12} />
        <MainMenu>{mainMenu.map(m => <MenuItem type="button" key={m}>{m}</MenuItem>)}</MainMenu>
        <Spacer />
        <span>工作区:</span>&nbsp;
        <Select label="工作区" value="常规*" w={113} h={15} />
        <Tool n="lock" s={10} w={18} />
      </MenuLine>
      <StatusLine>
        <Grip />
        <Select label="菜单集" value="建模" w={68} h={15} />
        {statusA.map((n, i) => (n === '|' ? <Bar key={i} /> : <Tool key={i} n={n} s={13} on={n === 'selObj'} />))}
        <Tool n="down" s={8} w={12} />
        <Field $w={70} $flat aria-label="激活对象" defaultValue="未激活曲面" />
        <Bar $w={18} />
        <Tool n="down" s={8} w={12} />
        <Field $w={70} $flat aria-label="对称" defaultValue="对称: 禁用" />
        {statusB.map((n, i) => (n === '|' ? <Bar key={i} $h={8} /> : <Tool key={i} n={n} s={13} />))}
        <Select label="账户" value="登录" w={84} icon="user" />
        <Spacer />
        {['modelKit', 'human', 'attr', 'toolSet', 'channelBox'].map(n => <Tool key={n} n={n} on={n === 'channelBox'} />)}
      </StatusLine>
      <Shelf>
        <Grip />
        <ShelfSide><Icon n="burger" s={9} /><Icon n="gear" s={9} /></ShelfSide>
        <ShelfBody>
          <TabStrip>{shelfTabs.map((t, i) => <Tab type="button" key={t} $on={i === 2}>{t}</Tab>)}</TabStrip>
          <ShelfRow>
            <ShelfIcons>{shelf.map((n, i) => (n === '|' ? <Bar key={i} $w={8} $h={24} /> : <Tool key={i} n={n} s={18} />))}</ShelfIcons>
            <ShelfScroll><Icon n="up" s={8} /><Knob /><Icon n="down" s={8} /></ShelfScroll>
          </ShelfRow>
        </ShelfBody>
      </Shelf>

      <Work>
        <ToolBox>
          <TopDots />
          {['arrow', 'lasso', 'paint', 'move', 'rotate', 'scale'].map(n => <Tool key={n} n={n} s={20} w={25} h={24} on={n === 'arrow'} />)}
          <Spacer />
          <Rule />
          {['single', 'four', 'two', 'outliner'].map(n => <Tool key={n} n={n} s={19} w={25} h={24} on={n === 'outliner'} />)}
          <Rule />
          <Tool n="search" s={16} w={25} h={24} />
          <Tool n="maya" s={20} w={25} h={34} />
        </ToolBox>

        <Outliner>
          <PanelTabs><Tab type="button" $on>大纲视图</Tab></PanelTabs>
          <Menus items={['展示', '显示', '帮助']} />
          <SearchRow>
            <Icon n="filter" s={12} />
            <SearchBox><Field aria-label="搜索" placeholder="搜索..." /><Icon n="down" s={10} /></SearchBox>
          </SearchRow>
          <TreeArea>
            <Tree>
              {['persp', 'top', 'front', 'side'].map(n => <TreeItem key={n} $dim><Icon n="camera" s={11} />{n}</TreeItem>)}
              {['defaultLightSet', 'defaultObjectSet'].map(n => <TreeItem key={n}><Icon n="set" s={11} />{n}</TreeItem>)}
            </Tree>
            <VScroll><Icon n="up" s={8} /><VThumb /><Icon n="down" s={8} /></VScroll>
          </TreeArea>
          <HScroll><Icon n="left" s={8} /><HThumb $grow={153} /><Icon n="right" s={8} /><Rest $grow={10} /></HScroll>
          <BottomDots><span /><span /><span /></BottomDots>
        </Outliner>

        <Viewport>
          <Menus items={['视图', '着色', '照明', '显示', '渲染器', '面板']} pad={5} />
          <PanelTools>
            <PanelIcons>
              {panelTools.map((n, i) => (n === '|' ? <Bar key={i} $w={6} /> : <Tool key={i} n={n} s={11} on={n === 'gridOn' || n === 'shaded'} />))}
            </PanelIcons>
            <Field $w={28} $h={12} aria-label="曝光" defaultValue="0.00" />
            <Tool n="gamma" s={8} w={15} />
            <Field $w={28} $h={12} aria-label="伽马" defaultValue="1.00" />
            <Tool n="colorMgmt" s={11} w={14} h={14} on />
            <ColorSpace type="button">ACES 1.0</ColorSpace>
          </PanelTools>
          <Canvas>
            <Scene viewBox="222 146 654 363" preserveAspectRatio="xMidYMid slice">
              <GroundGrid />
              <ViewCube />
              <AxisMark />
              <text x="543" y="502" textAnchor="middle" fontFamily="Open Sans" fontWeight="700" fontSize="7" fill="#f0f0f0">persp</text>
            </Scene>
          </Canvas>
        </Viewport>

        <RightPanel>
          <CornerIcons><Icon n="axis" s={11} /><Icon n="magnetTeal" s={11} /><Icon n="pinEdit" s={11} /></CornerIcons>
          <Menus items={['通道', '编辑', '对象', '显示']} pad={4} />
          <Notice>选择场景中的对象以查看、编辑和设<br />置通道(属性)上的关键帧</Notice>
          <BottomDots><span /><span /><span /></BottomDots>
          <LayerEditor>
            <PanelTabs><Tab type="button" $on>显示</Tab><Tab type="button">动画</Tab></PanelTabs>
            <Menus items={['层', '选项', '帮助']} />
            <LayerTools>
              {['layerUp', 'layerDown', 'layerNew', 'layerSel'].map(n => <Icon key={n} n={n} s={11} />)}
            </LayerTools>
            <LayerList />
            <HScroll><Rest $grow={1} /><Icon n="left" s={8} /><HThumb $grow={108} /><Rest $grow={48} /><Icon n="right" s={8} /></HScroll>
          </LayerEditor>
        </RightPanel>
        <SideTabs>
          <SideTab type="button" $h={79}>通道盒/层编辑器</SideTab>
          <SideTab type="button" $h={58}>属性编辑器</SideTab>
          <SideTab type="button" $h={58}>建模工具包</SideTab>
        </SideTabs>
      </Work>

      <Line $h={35}>
        <Grip />
        <TimeSlider>
          <Lead><Current>1</Current></Lead>
          {frames.map(f => <Tick key={f} $grow={f === 120 ? 37 : 100}>{f}</Tick>)}
        </TimeSlider>
        <Field $w={39} aria-label="当前帧" defaultValue="1" />
        <PlayRow>{play.map(n => <Tool key={n} n={n} s={14} />)}</PlayRow>
      </Line>
      <Line $h={27}>
        <Grip />
        <Field $w={40} aria-label="开始帧" defaultValue="1" />
        <Range>
          <Handle type="button" aria-label="范围开始" />
          <RangeBody><span>1</span><span>120</span></RangeBody>
          <Handle type="button" aria-label="范围结束" />
          <Rest $grow={186} />
        </Range>
        <Field $w={40} aria-label="结束帧" defaultValue="200" />
        <Bar $w={30} $h={14} />
        <Tool n="addMark" />
        <Bar $w={28} $h={7} />
        <Tool n="down" s={8} />
        <Field $w={71} $flat aria-label="角色集" defaultValue="无角色集" />
        <Tool n="down" s={8} w={20} />
        <Field $w={72} $flat aria-label="动画层" defaultValue="无动画层" />
        <Bar $w={30} $h={7} />
        <Select label="帧速率" value="24 fps" w={74} h={15} />
        <Tool n="loop" w={28} />
        <Tool n="cache" on />
        <Bar $w={26} $h={14} />
        <Tool n="speaker" w={20} /><Tool n="autoKey" w={20} /><Tool n="prefs" w={22} />
      </Line>
      <Line $h={26}>
        <HelpCell><Grip /><Tool n="help" s={12} /></HelpCell>
        <CommandCell>
          <Grip />MEL
          <Field $w={139} aria-label="MEL" /><Field aria-label="输出" readOnly />
        </CommandCell>
        <Tool n="script" s={13} w={22} />
      </Line>
    </Page>
  );
}
